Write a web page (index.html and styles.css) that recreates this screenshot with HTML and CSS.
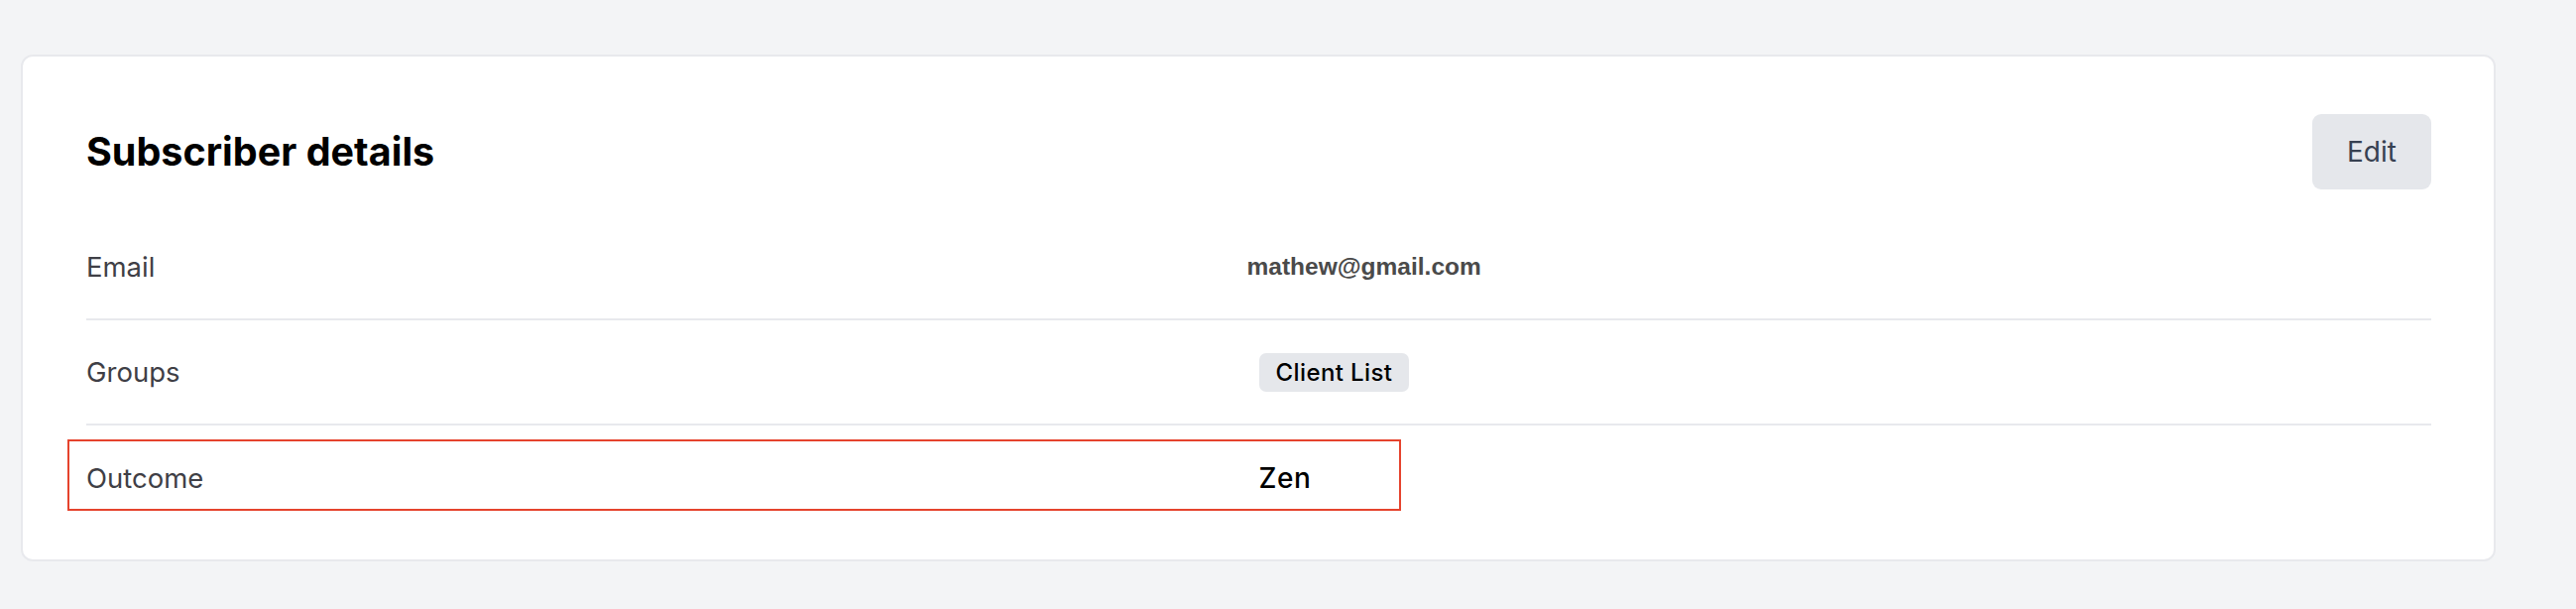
FILE: index.html
```html
<!DOCTYPE html>
<html lang="en">
<head>
<meta charset="utf-8">
<title>Subscriber details</title>
<link rel="stylesheet" href="styles.css">
</head>
<body>
  <main class="page">
    <section class="card">
      <header class="card-header">
        <h1 class="card-title">Subscriber details</h1>
        <button class="btn-edit" type="button">Edit</button>
      </header>
      <dl class="details">
        <div class="row">
          <dt class="label">Email</dt>
          <dd class="value value-email">mathew@gmail.com</dd>
        </div>
        <div class="row">
          <dt class="label">Groups</dt>
          <dd class="value"><span class="badge">Client List</span></dd>
        </div>
        <div class="row row-last">
          <div class="highlight"></div>
          <dt class="label">Outcome</dt>
          <dd class="value value-strong">Zen</dd>
        </div>
      </dl>
    </section>
  </main>
</body>
</html>
```
FILE: styles.css
```css
* { box-sizing: border-box; }
html, body { margin: 0; padding: 0; }
body {
  background: #f3f4f6;
  font-family: Inter, "Noto Sans", sans-serif;
  width: 2598px;
  height: 614px;
  overflow: hidden;
}
.page {
  padding: 55px 0 0 21px;
}
.card {
  width: 2496px;
  height: 511px;
  background: #ffffff;
  border: 2px solid #e8e9ed;
  border-radius: 12px;
  padding: 58px 63px 29px 64px;
}
.card-header {
  display: flex;
  justify-content: space-between;
  align-items: center;
  height: 76px;
}
.card-title {
  margin: 0;
  font-size: 39.5px;
  font-weight: 700;
  color: #000000;
  letter-spacing: 0;
}
.btn-edit {
  width: 120px;
  height: 76px;
  border: none;
  border-radius: 9px;
  background: #e5e7eb;
  color: #374151;
  font-family: Inter, "Noto Sans", sans-serif;
  font-size: 28px;
  font-weight: 400;
  padding: 0;
}
.details {
  margin: 26px 0 0 0;
}
.row {
  position: relative;
  display: grid;
  grid-template-columns: 1fr 1fr;
  align-items: center;
  height: 106px;
  border-bottom: 2px solid #e8e9ed;
}
.row-last {
  border-bottom: none;
}
.label {
  margin: 0;
  font-size: 27.5px;
  font-weight: 400;
  color: #3f3f46;
}
.value {
  margin: 0;
}
.value-email {
  margin-left: -12px;
  font-family: "Liberation Sans", Arial, sans-serif;
  font-weight: 700;
  font-size: 24.5px;
  color: #4a4a4a;
}
.badge {
  display: inline-flex;
  align-items: center;
  height: 39px;
  padding: 0 17px;
  border-radius: 7px;
  background: #e5e7eb;
  color: #000000;
  font-size: 24px;
  font-weight: 500;
  letter-spacing: 0.4px;
}
.value-strong {
  font-size: 28px;
  font-weight: 500;
  color: #000000;
  letter-spacing: 0.6px;
}
.highlight {
  position: absolute;
  left: -19px;
  top: 14px;
  width: 1345px;
  height: 72px;
  border: 2px solid #e5432d;
  pointer-events: none;
}
```
